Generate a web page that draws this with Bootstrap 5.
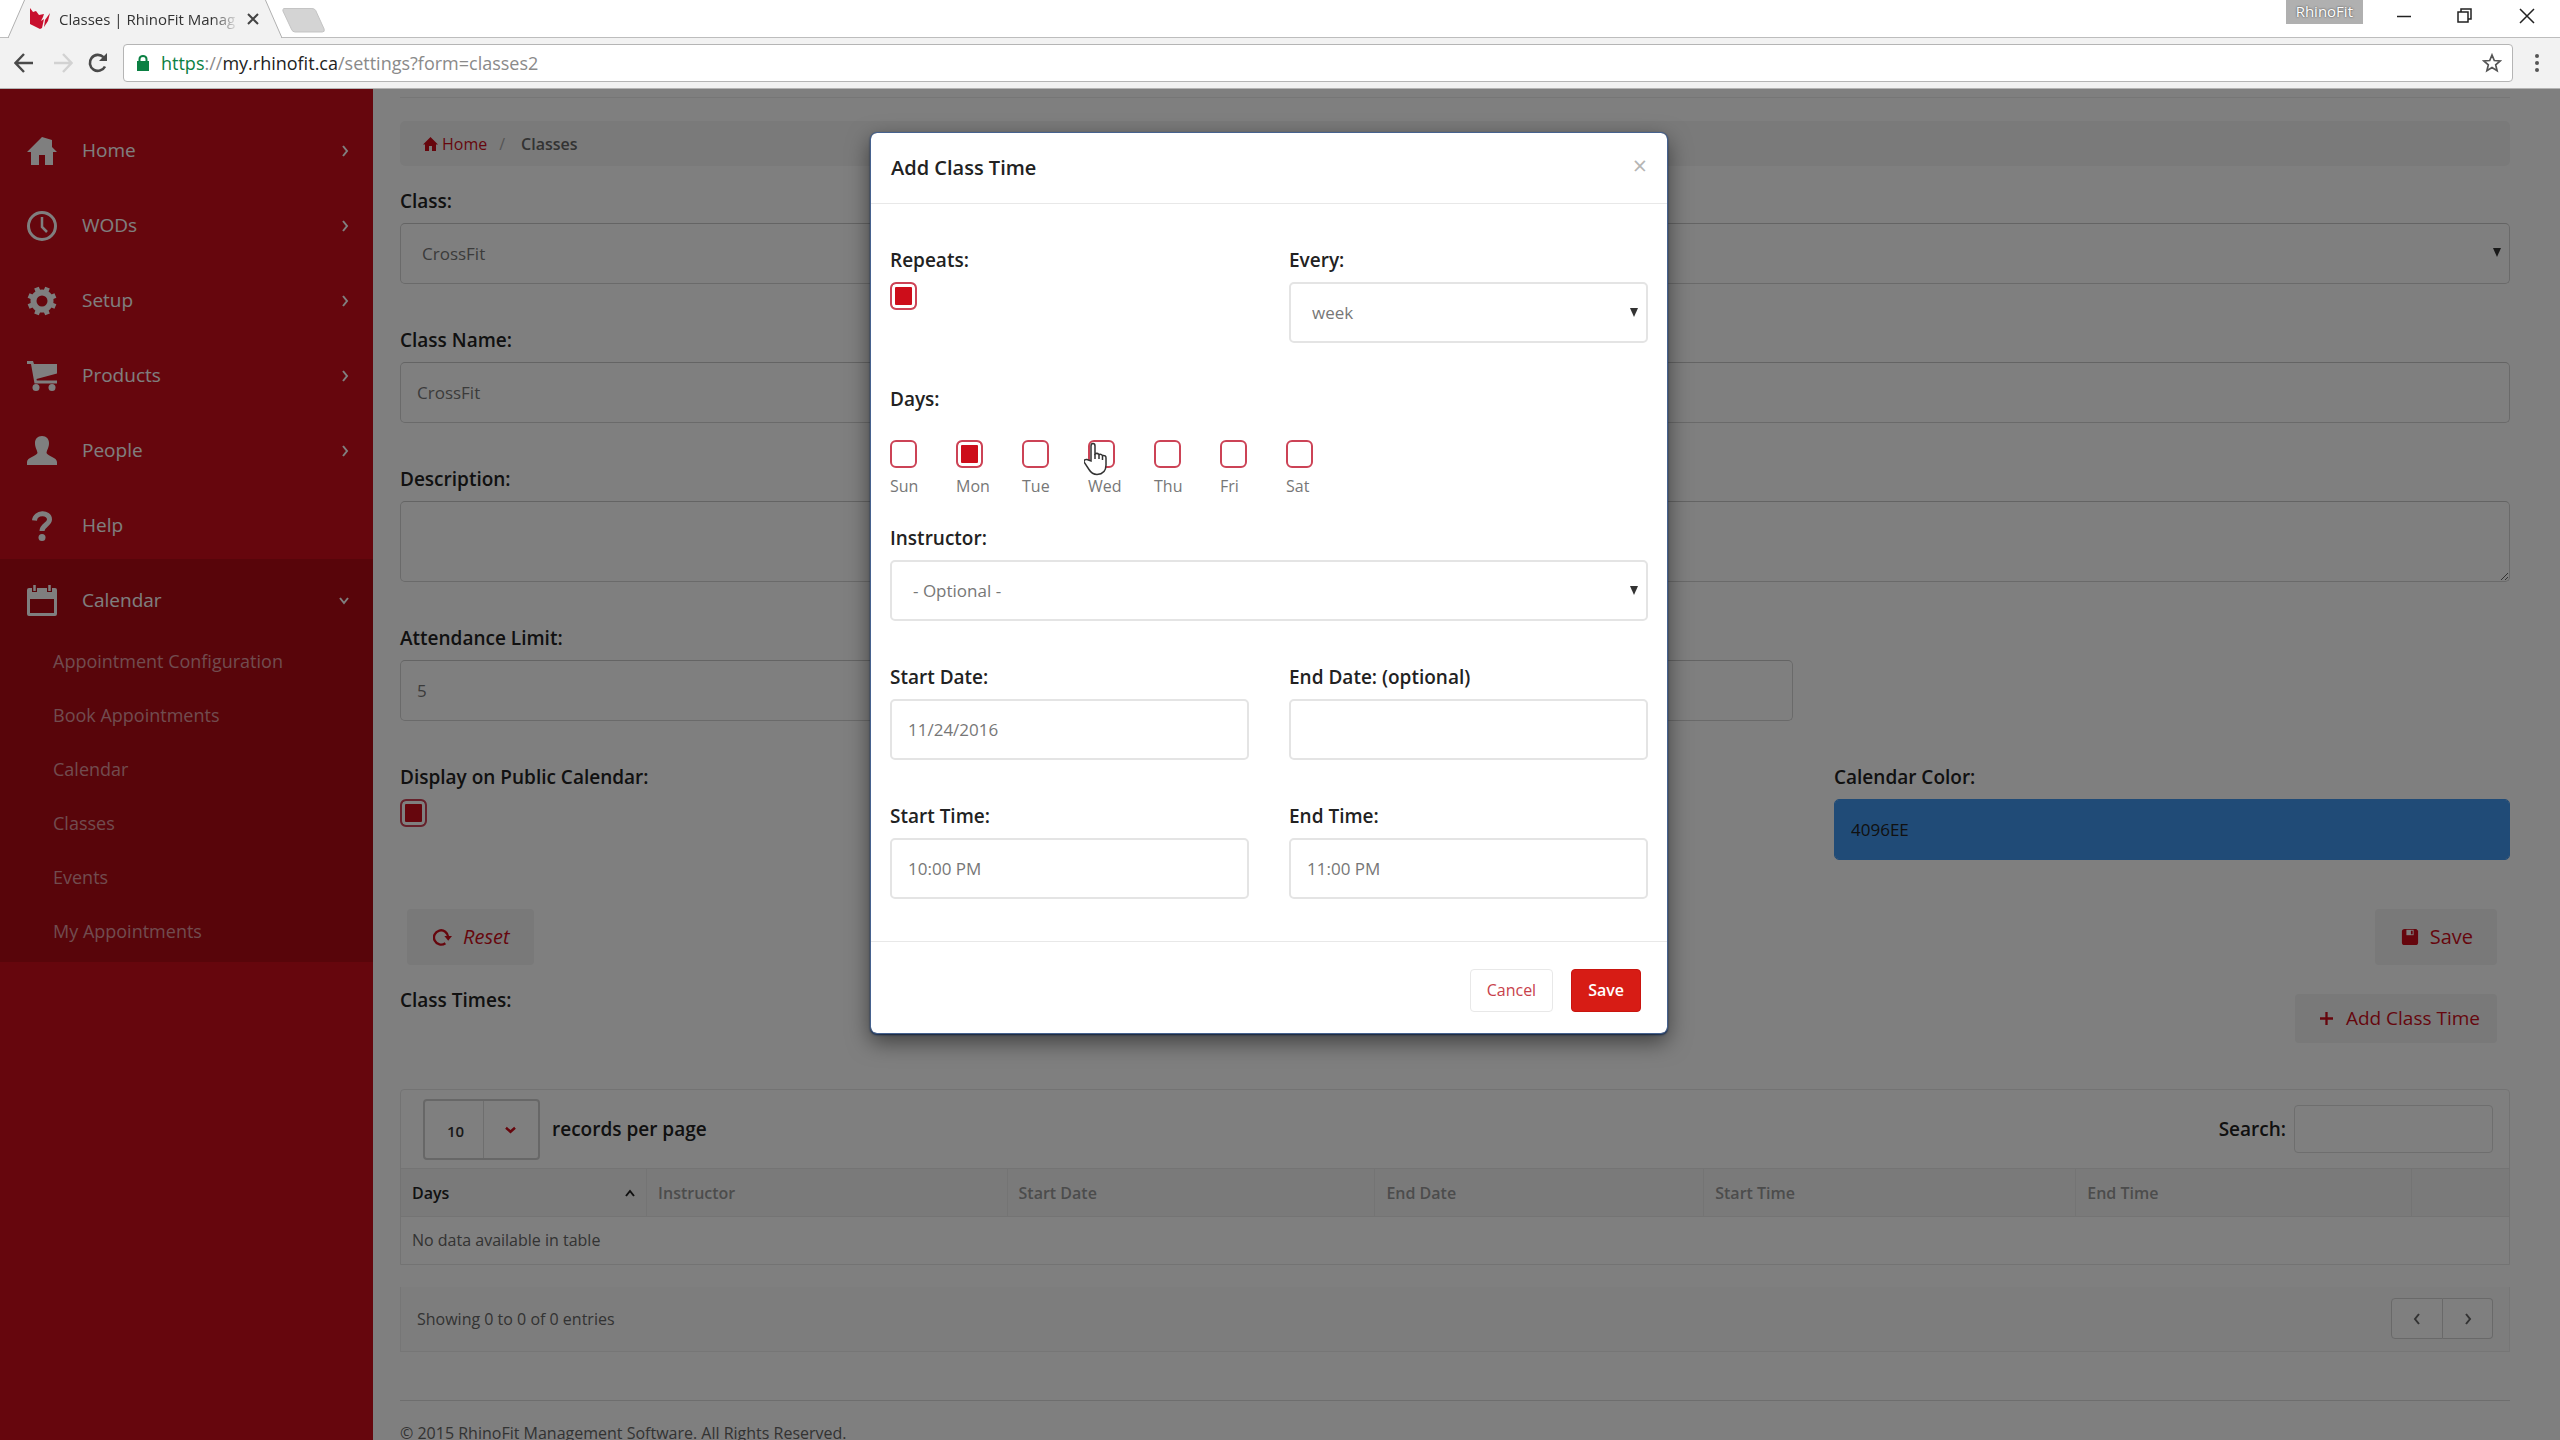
<!DOCTYPE html>
<html lang="en">
<head>
<meta charset="utf-8">
<meta name="viewport" content="width=device-width, initial-scale=1">
<title>Classes | RhinoFit Management</title>
<link href="https://cdn.jsdelivr.net/npm/bootstrap@5.3.0/dist/css/bootstrap.min.css" rel="stylesheet">
<style>
  body { font-family: "Open Sans", "Noto Sans", sans-serif; font-size: 17px; color: #666; background: #fff; }
  a { text-decoration: none; }

  /* browser frame */
  .tabstrip { height: 38px; border-bottom: 1px solid #bdbdbd; }
  .browser-tab { width: 274px; height: 38px; margin-left: 8px; margin-bottom: -1px; padding: 0 23px 0 21px; color: #333; font-size: 15px; }
  .tab-shape { position: absolute; inset: 0; }
  .tab-name { flex: 1; white-space: nowrap; -webkit-mask-image: linear-gradient(90deg, #000 85%, transparent); mask-image: linear-gradient(90deg, #000 85%, transparent); }
  .bare-btn { border: 0; background: none; padding: 0; line-height: 0; color: #333; }
  .profile-btn { height: 24px; padding: 0 10px 2px; background: #b0b0b0; color: #fff; font-size: 15px; line-height: 22px; border: 0; text-shadow: 0 0 2px #333; }
  .window-btns { gap: 34px; padding-right: 25px; }
  .caption-btns { gap: 46px; }
  .toolbar { height: 51px; background: #f2f2f2; border-bottom: 1px solid #b4b4b4; padding: 0 18px 0 14px; gap: 15px; }
  .address { height: 38px; padding: 0 10px 0 13px; border: 1px solid #b5b5b5; border-radius: 4px; background: #fff; font-size: 18px; color: #8a8a8a; gap: 12px; }
  .url-scheme { color: #0b8043; }
  .url-host { color: #222; }

  /* page */
  .viewport { flex: 1; min-height: 0; overflow: hidden; }
  .sidebar { width: 373px; background: #cd0d1a; padding-top: 20px; }
  .side-link { height: 75px; padding: 8px 24px 0 26px; color: #fff; font-size: 19px; }
  .side-link .side-icon { width: 32px; margin-right: 24px; }
  .side-open { background: #b00a15; padding-bottom: 4px; }
  .sub-link { height: 54px; padding-left: 53px; color: #e2999f; font-size: 18px; }

  .main-area { padding: 8px 50px 0 27px; }
  .top-rule { border-top: 1px solid #ededed; margin-bottom: 23px; }
  .crumbs { height: 45px; padding: 0 23px; background: #f5f5f5; border-radius: 5px; margin-bottom: 21px; font-size: 16px; }
  .crumbs a { color: #cd0d1a; }
  .crumb-sep { margin: 0 16px 0 12px; color: #aaa; }
  .field-label { display: block; font-size: 19px; line-height: 28px; margin-bottom: 8px; font-weight: 600; color: #222; }
  .field { margin-bottom: 42px; }
  .field-row { --bs-gutter-x: 41px; }
  .text-box { height: 61px; padding: 0 16px; border: 1px solid #d4d4d4; border-top-color: #c8c8c8; border-radius: 5px; font-size: 17px; color: #777; background-color: #fff; }
  .form-select.text-box { padding-left: 21px; background-image: url("data:image/svg+xml,%3Csvg xmlns='http://www.w3.org/2000/svg' viewBox='0 0 8 9'%3E%3Cpath d='M0 0h8L4 9z' fill='%23333'/%3E%3C/svg%3E"); background-size: 8px 9px; background-position: right 8px top 24px; }
  .area-box { height: 81px; }
  .color-box { background-color: #4096ee; border-color: #4096ee; color: #222; }
  .tick { display: block; appearance: none; width: 27px; height: 28px; margin: 0; border: 2px solid #cc4356; border-radius: 6px; background: #fff; }
  .tick:checked { background: #cd0d1a; box-shadow: inset 0 0 0 3px #fff; }
  .form-actions { margin-top: 49px; padding: 0 13px 0 7px; }
  .times-head { padding: 21px 13px 0 0; }
  .gray-btn { height: 56px; padding: 0 24px 0 26px; border: 0; border-radius: 4px; background: #f2f2f2; color: #cd0d1a; font-size: 20px; font-weight: 500; gap: 11px; }
  .short-btn { height: 49px; padding: 0 17px 0 25px; gap: 13px; font-size: 19px; }

  .grid-panel { border: 1px solid #e6e6e6; border-radius: 4px 4px 0 0; margin-top: 46px; }
  .grid-bar { height: 78px; padding: 0 16px 0 22px; }
  .grid-bar .field-label { margin: 0; }
  .count-box { appearance: none; width: 117px; height: 61px; border: 2px solid #cfcfcf; border-radius: 4px; padding: 4px 0 0 22px; font-size: 15px; font-weight: 600; color: #333; background: url("data:image/svg+xml,%3Csvg xmlns='http://www.w3.org/2000/svg' viewBox='0 0 55 60'%3E%3Cpath d='M.5 0v60' stroke='%23ddd'/%3E%3Cpath d='M23 28l4.500 4 4.500-4' fill='none' stroke='%23cd0d1a' stroke-width='2.500'/%3E%3C/svg%3E") right 0 center / 55px 60px no-repeat; }
  .search-box { width: 199px; height: 48px; border: 1px solid #dcdcdc; border-radius: 4px; }
  .class-grid { table-layout: fixed; margin: 0; font-size: 16px; color: #666; }
  .class-grid th { height: 48px; padding: 0 11px; background: #f5f5f5; border: 0 solid #e9e9e9; border-width: 1px 0 1px 1px; color: #999; font-weight: 600; vertical-align: middle; }
  .class-grid th:first-child { color: #222; border-left: 0; }
  .class-grid td { height: 47px; padding: 0 11px; border: 0; color: #666; vertical-align: middle; }
  .grid-foot { height: 65px; margin-top: 22px; padding: 0 16px; background: #fafafa; border: 1px solid #ededed; border-top: 0; font-size: 16px; }
  .page-btn { width: 52px; height: 41px; border: 1px solid #d2d2d2; background: #fff; color: #666; border-radius: 4px 0 0 4px; padding: 0; line-height: 0; }
  .page-btn + .page-btn { border-left: 0; border-radius: 0 4px 4px 0; width: 50px; }
  .page-foot { margin-top: 48px; padding-top: 20px; border-top: 1px solid #dcdcdc; font-size: 16px; white-space: nowrap; }

  /* dialog */
  .shade { position: absolute; inset: 0; background: rgba(0, 0, 0, .5); }
  .dialog-layer { position: absolute; padding-right: 22px; }
  .dialog-layer .modal-dialog { max-width: 798px; margin: 43px auto; }
  .dialog-layer .modal-content { border: 1px solid #46628f; border-radius: 7px; box-shadow: 0 8px 22px rgba(0, 0, 0, .5), 0 1px 2px #1b3868; color: #777; }
  .dialog-layer .modal-header { height: 71px; padding: 0 20px; border-color: #e8e8e8; }
  .dialog-layer .modal-title { font-size: 20px; font-weight: 600; color: #222; }
  .dialog-layer .modal-body { padding: 42px 19px 0; }
  .dialog-layer .modal-footer { height: 92px; padding: 5px 26px 0 0; gap: 18px; border-color: #e8e8e8; }
  .dialog-layer .modal-footer > * { margin: 0; }
  .half-row { --bs-gutter-x: 40px; }
  .half-row .text-box, .wide-field .text-box { border: 2px solid #e4e4e4; }
  .days { margin: 27px 0 26px; }
  .day { width: 66px; font-size: 16px; }
  .day label { display: block; line-height: 24px; margin-top: 6px; }
  .pointer { position: absolute; left: -4px; top: 2px; }
  .foot-btn { height: 43px; border: 1px solid #e8e8e8; border-radius: 4px; font-size: 16px; padding: 0 16px; background: #fff; color: #c8414b; }
  .foot-save { background: #d71c15; border-color: #c9150f; color: #fff; font-weight: 600; }
  .close-x { font-size: 25px; color: #b5b5b5; line-height: 22px; padding-bottom: 6px; }
</style>
</head>
<body class="vh-100 overflow-hidden d-flex flex-column">

<header>
  <div class="tabstrip d-flex align-items-start">
    <div class="browser-tab position-relative d-flex align-items-center gap-2">
      <svg class="tab-shape" width="274" height="38" viewBox="0 0 274 38"><path d="M0 38L17-1H257L274 38Z" fill="#f2f2f2" stroke="#b0b0b0"/><path d="M1 37.500H273" stroke="#f2f2f2" stroke-width="2"/></svg>
      <svg class="position-relative" width="22" height="22" viewBox="0 0 22 22" fill="#c8102e"><path d="M1 0l3 4 3-1 3 4 5-1-1 3-2 4 3-2-2 9-2 1-10-5z"/><path d="M21 5l-2 8-4 6 1-7z"/></svg>
      <span class="tab-name position-relative">Classes | RhinoFit Manag</span>
      <button class="bare-btn position-relative" aria-label="Close tab"><svg width="12" height="12" viewBox="0 0 12 12" stroke="#444" stroke-width="2"><path d="M1 1l10 10M11 1L1 11"/></svg></button>
    </div>
    <button class="bare-btn mt-2" aria-label="New tab"><svg width="44" height="25" viewBox="0 0 47 25" preserveAspectRatio="none"><path d="M2 .5H32q3 0 4 2L45 21q1 3-2 3H14q-3 0-4-3L1 3Q.5 1 2 .5Z" fill="#d4d4d4" stroke="#c2c2c2"/></svg></button>
    <div class="window-btns d-flex align-items-start ms-auto">
      <button class="profile-btn">RhinoFit</button>
      <div class="caption-btns d-flex align-items-center mt-2">
        <button class="bare-btn" aria-label="Minimize"><svg width="14" height="16" viewBox="0 0 14 16" stroke="#222"><path d="M0 8.500h14" stroke-width="1.500"/></svg></button>
        <button class="bare-btn" aria-label="Restore"><svg width="16" height="16" viewBox="0 0 16 16" fill="none" stroke="#222" stroke-width="1.500"><path d="M1 4h10v10H1zM4 4V1h10v10h-3"/></svg></button>
        <button class="bare-btn" aria-label="Close"><svg width="16" height="16" viewBox="0 0 16 16" stroke="#222" stroke-width="1.500"><path d="M1 1l14 14M15 1L1 15"/></svg></button>
      </div>
    </div>
  </div>
  <div class="toolbar d-flex align-items-center">
    <button class="bare-btn" aria-label="Back"><svg width="20" height="20" viewBox="0 0 20 20" fill="none" stroke="#4a4a4a" stroke-width="2.400"><path d="M19 10H2M10 1L1.500 10 10 19"/></svg></button>
    <button class="bare-btn ms-1" aria-label="Forward"><svg width="20" height="20" viewBox="0 0 20 20" fill="none" stroke="#d2d2d2" stroke-width="2.400"><path d="M1 10h17M10 1l8.500 9L10 19"/></svg></button>
    <button class="bare-btn" aria-label="Reload"><svg width="20" height="20" viewBox="0 0 20 20"><path d="M17 13.500A8 8 0 1 1 15.500 4.200" fill="none" stroke="#4a4a4a" stroke-width="2.600"/><path d="M19 0v8h-8z" fill="#4a4a4a"/></svg></button>
    <div class="address d-flex align-items-center flex-fill" role="textbox" aria-label="Address">
      <svg width="12" height="16" viewBox="0 0 12 16"><path d="M0 6h12v10H0z" fill="#0b8043"/><path d="M2.500 7V4a3.500 3 0 0 1 7 0v3" fill="none" stroke="#0b8043" stroke-width="2"/></svg>
      <span class="flex-fill"><span class="url-scheme">https</span>://<span class="url-host">my.rhinofit.ca</span>/settings?form=classes2</span>
      <button class="bare-btn" aria-label="Bookmark"><svg width="20" height="20" viewBox="0 0 20 20" fill="none" stroke="#555" stroke-width="1.700"><path d="M10 2l2.300 5.500 5.900.5-4.500 3.900 1.400 5.800L10 14.600l-5.100 3.100 1.400-5.800L1.800 8l5.900-.5z"/></svg></button>
    </div>
    <button class="bare-btn ms-1" aria-label="Menu"><svg width="10" height="20" viewBox="0 0 10 20" fill="#555"><circle cx="5" cy="3" r="2"/><circle cx="5" cy="10" r="2"/><circle cx="5" cy="17" r="2"/></svg></button>
  </div>
</header>

<div class="viewport position-relative d-flex">
  <nav class="sidebar flex-shrink-0" aria-label="Main">
    <a href="#" class="side-link d-flex align-items-center"><svg class="side-icon" height="32" viewBox="0 0 32 32" fill="#fff"><path d="M16 2L1 17h4v13h8V20h6v10h8V17h4l-5-5V5z"/></svg><span class="flex-fill">Home</span><svg width="8" height="12" viewBox="0 0 8 12" fill="none" stroke="#fff" stroke-width="2"><path d="M2 1l4 5-4 5"/></svg></a>
    <a href="#" class="side-link d-flex align-items-center"><svg class="side-icon" height="32" viewBox="0 0 32 32" fill="none" stroke="#fff"><circle cx="16" cy="16" r="13.500" stroke-width="3"/><path d="M16 7v10l5 5" stroke-width="2.500"/></svg><span class="flex-fill">WODs</span><svg width="8" height="12" viewBox="0 0 8 12" fill="none" stroke="#fff" stroke-width="2"><path d="M2 1l4 5-4 5"/></svg></a>
    <a href="#" class="side-link d-flex align-items-center"><svg class="side-icon" height="32" viewBox="0 0 32 32"><circle cx="16" cy="16" r="8.500" fill="none" stroke="#fff" stroke-width="6"/><g stroke="#fff" stroke-width="5"><path d="M10.500 2.600l11 26.800M21.500 2.600l-11 26.800M2.600 10.500l26.800 11M2.600 21.500l26.800-11"/></g><circle cx="16" cy="16" r="5.500" fill="#cd0d1a"/></svg><span class="flex-fill">Setup</span><svg width="8" height="12" viewBox="0 0 8 12" fill="none" stroke="#fff" stroke-width="2"><path d="M2 1l4 5-4 5"/></svg></a>
    <a href="#" class="side-link d-flex align-items-center"><svg class="side-icon" height="32" viewBox="0 0 32 32" fill="#fff"><path d="M1 1h6l1 3h23v9.500L10.500 19 10.800 20.500H31v3H8.500L5 4H1z"/><circle cx="10" cy="27.500" r="3.500"/><circle cx="26" cy="27.500" r="3.500"/></svg><span class="flex-fill">Products</span><svg width="8" height="12" viewBox="0 0 8 12" fill="none" stroke="#fff" stroke-width="2"><path d="M2 1l4 5-4 5"/></svg></a>
    <a href="#" class="side-link d-flex align-items-center"><svg class="side-icon" height="32" viewBox="0 0 32 32" fill="#fff"><path d="M16 1c4.500 0 7 3 7 7 0 5-2 6-2.500 10 1 3 10.500 4.500 10.500 9v3H1v-3c0-4.500 9.500-6 10.500-9C11 14 9 13 9 8c0-4 2.500-7 7-7z"/></svg><span class="flex-fill">People</span><svg width="8" height="12" viewBox="0 0 8 12" fill="none" stroke="#fff" stroke-width="2"><path d="M2 1l4 5-4 5"/></svg></a>
    <a href="#" class="side-link d-flex align-items-center"><svg class="side-icon" height="32" viewBox="0 0 32 32"><path d="M8.500 10.500C9 2 23.500 1.500 23.500 9.500c0 5-7.500 5.500-7.500 11.500" fill="none" stroke="#fff" stroke-width="5"/><circle cx="16" cy="27.500" r="3.500" fill="#fff"/></svg><span class="flex-fill">Help</span></a>
    <div class="side-open">
      <a href="#" class="side-link d-flex align-items-center"><svg class="side-icon" height="32" viewBox="0 0 32 32" fill="#fff"><path fill-rule="evenodd" d="M3 3h26q2 0 2 2v24q0 2-2 2H3q-2 0-2-2V5q0-2 2-2zm1 11v14h24V14z"/><path d="M8.500 0v7M23.500 0v7" stroke="#b00a15" stroke-width="5"/><path d="M8.500 0v6M23.500 0v6" stroke="#fff" stroke-width="2.500"/></svg><span class="flex-fill">Calendar</span><svg width="10" height="8" viewBox="0 0 10 8" fill="none" stroke="#fff" stroke-width="2"><path d="M1 1l4 5 4-5"/></svg></a>
      <a href="#" class="sub-link d-flex align-items-center">Appointment Configuration</a>
      <a href="#" class="sub-link d-flex align-items-center">Book Appointments</a>
      <a href="#" class="sub-link d-flex align-items-center">Calendar</a>
      <a href="#" class="sub-link d-flex align-items-center">Classes</a>
      <a href="#" class="sub-link d-flex align-items-center">Events</a>
      <a href="#" class="sub-link d-flex align-items-center">My Appointments</a>
    </div>
  </nav>

  <main class="main-area flex-fill">
    <div class="top-rule"></div>
    <div class="crumbs d-flex align-items-center">
      <a href="#" class="d-flex align-items-center gap-1"><svg width="15" height="14" viewBox="0 0 15 14" fill="#cd0d1a"><path d="M7.500 0L0 7.500h2V14h4V9h3v5h4V7.500h2z"/></svg>Home</a>
      <span class="crumb-sep">/</span><span class="fw-semibold">Classes</span>
    </div>
    <div class="field"><label class="field-label" for="cls">Class:</label><select id="cls" class="form-select text-box"><option>CrossFit</option></select></div>
    <div class="field"><label class="field-label" for="cname">Class Name:</label><input id="cname" class="form-control text-box" value="CrossFit"></div>
    <div class="field"><label class="field-label" for="desc">Description:</label><textarea id="desc" class="form-control text-box area-box"></textarea></div>
    <div class="row field-row"><div class="col-8 field"><label class="field-label" for="lim">Attendance Limit:</label><input id="lim" class="form-control text-box" value="5"></div></div>
    <div class="row field-row">
      <div class="col-8"><label class="field-label" for="pub">Display on Public Calendar:</label><input id="pub" type="checkbox" class="tick" checked></div>
      <div class="col-4"><label class="field-label" for="color">Calendar Color:</label><input id="color" class="form-control text-box color-box" value="4096EE"></div>
    </div>
    <div class="form-actions d-flex justify-content-between">
      <button type="reset" class="gray-btn d-flex align-items-center fst-italic"><svg width="19" height="20" viewBox="0 0 20 20"><path d="M13 16.500A7.500 7.500 0 1 1 16 10" fill="none" stroke="#cd0d1a" stroke-width="2.500"/><path d="M12 9h8l-4 5z" fill="#cd0d1a"/></svg>Reset</button>
      <button type="submit" class="gray-btn d-flex align-items-center"><svg width="18" height="18" viewBox="0 0 20 20"><path d="M4 1h13l2 2v13q0 3-3 3H4q-3 0-3-3V4q0-3 3-3z" fill="#cd0d1a"/><path d="M6 2h8v6H6z" fill="#fff"/><path d="M11 3h2v4h-2z" fill="#cd0d1a"/></svg>Save</button>
    </div>
    <div class="times-head d-flex justify-content-between align-items-start">
      <span class="field-label">Class Times:</span>
      <button class="gray-btn short-btn d-flex align-items-center mt-2"><svg width="13" height="13" viewBox="0 0 14 14" stroke="#cd0d1a" stroke-width="2.500"><path d="M0 7h14M7 0v14"/></svg>Add Class Time</button>
    </div>

    <div class="grid-panel">
      <div class="grid-bar d-flex align-items-center">
        <select id="count" class="count-box" aria-labelledby="count-l"><option>10</option></select>
        <label id="count-l" class="field-label ps-2 ms-1" for="count">records per page</label>
        <label class="field-label ms-auto me-2" for="find">Search:</label>
        <input id="find" class="search-box" type="search">
      </div>
      <table class="table class-grid">
        <colgroup><col style="width:11.650%"><col style="width:17.100%"><col style="width:17.450%"><col style="width:15.600%"><col style="width:17.650%"><col style="width:15.950%"><col></colgroup>
        <thead><tr>
          <th><div class="d-flex justify-content-between align-items-center">Days<svg width="10" height="8" viewBox="0 0 10 8" fill="none" stroke="#222" stroke-width="2"><path d="M1 7l4-5 4 5"/></svg></div></th>
          <th>Instructor</th><th>Start Date</th><th>End Date</th><th>Start Time</th><th>End Time</th><th></th>
        </tr></thead>
        <tbody><tr><td colspan="7">No data available in table</td></tr></tbody>
      </table>
    </div>
    <div class="grid-foot d-flex align-items-center justify-content-between">
      <span>Showing 0 to 0 of 0 entries</span>
      <div class="d-flex">
        <button class="page-btn" aria-label="Previous"><svg width="8" height="12" viewBox="0 0 8 12" fill="none" stroke="#666" stroke-width="2"><path d="M6 1L2 6l4 5"/></svg></button>
        <button class="page-btn" aria-label="Next"><svg width="8" height="12" viewBox="0 0 8 12" fill="none" stroke="#666" stroke-width="2"><path d="M2 1l4 5-4 5"/></svg></button>
      </div>
    </div>
    <footer class="page-foot">© 2015 RhinoFit Management Software. All Rights Reserved.</footer>
  </main>

  <div class="shade"></div>
  <div class="modal d-block dialog-layer" role="dialog" aria-labelledby="dlg-title">
    <div class="modal-dialog">
      <form class="modal-content">
        <div class="modal-header">
          <h1 class="modal-title" id="dlg-title">Add Class Time</h1>
          <button type="button" class="bare-btn close-x" aria-label="Close">×</button>
        </div>
        <div class="modal-body">
          <div class="row half-row">
            <div class="col-6 field"><label class="field-label" for="rep">Repeats:</label><input id="rep" type="checkbox" class="tick" checked></div>
            <div class="col-6 field"><label class="field-label" for="every">Every:</label><select id="every" class="form-select text-box"><option>week</option></select></div>
          </div>
          <span class="field-label">Days:</span>
          <div class="days d-flex">
            <div class="day"><input id="d0" type="checkbox" class="tick"><label for="d0">Sun</label></div>
            <div class="day"><input id="d1" type="checkbox" class="tick" checked><label for="d1">Mon</label></div>
            <div class="day"><input id="d2" type="checkbox" class="tick"><label for="d2">Tue</label></div>
            <div class="day position-relative"><input id="d3" type="checkbox" class="tick"><label for="d3">Wed</label>
              <svg class="pointer" width="26" height="34" viewBox="0 0 26 34"><path d="M9 19V4q0-2.500 2-2.500T13 4v8q2-1.500 4 .5 2-1 3.500 1 3.500-.5 3.500 2.500v7q0 9-9 9.500-5 0-8-5L2 20q0-3 3-2.500z" transform="translate(-2)" fill="#fff" stroke="#333" stroke-width="1.500"/><path d="M11 12v5M15 13v4M18.500 14v4" stroke="#333" stroke-width="1.500"/></svg></div>
            <div class="day"><input id="d4" type="checkbox" class="tick"><label for="d4">Thu</label></div>
            <div class="day"><input id="d5" type="checkbox" class="tick"><label for="d5">Fri</label></div>
            <div class="day"><input id="d6" type="checkbox" class="tick"><label for="d6">Sat</label></div>
          </div>
          <div class="field wide-field"><label class="field-label" for="inst">Instructor:</label><select id="inst" class="form-select text-box"><option>- Optional -</option></select></div>
          <div class="row half-row">
            <div class="col-6 field"><label class="field-label" for="sd">Start Date:</label><input id="sd" class="form-control text-box" value="11/24/2016"></div>
            <div class="col-6 field"><label class="field-label" for="ed">End Date: (optional)</label><input id="ed" class="form-control text-box"></div>
            <div class="col-6 field"><label class="field-label" for="st">Start Time:</label><input id="st" class="form-control text-box" value="10:00 PM"></div>
            <div class="col-6 field"><label class="field-label" for="et">End Time:</label><input id="et" class="form-control text-box" value="11:00 PM"></div>
          </div>
        </div>
        <div class="modal-footer">
          <button type="button" class="foot-btn">Cancel</button>
          <button type="submit" class="foot-btn foot-save">Save</button>
        </div>
      </form>
    </div>
  </div>
</div>
<script src="https://cdn.jsdelivr.net/npm/bootstrap@5.3.0/dist/js/bootstrap.bundle.min.js"></script>
</body>
</html>
